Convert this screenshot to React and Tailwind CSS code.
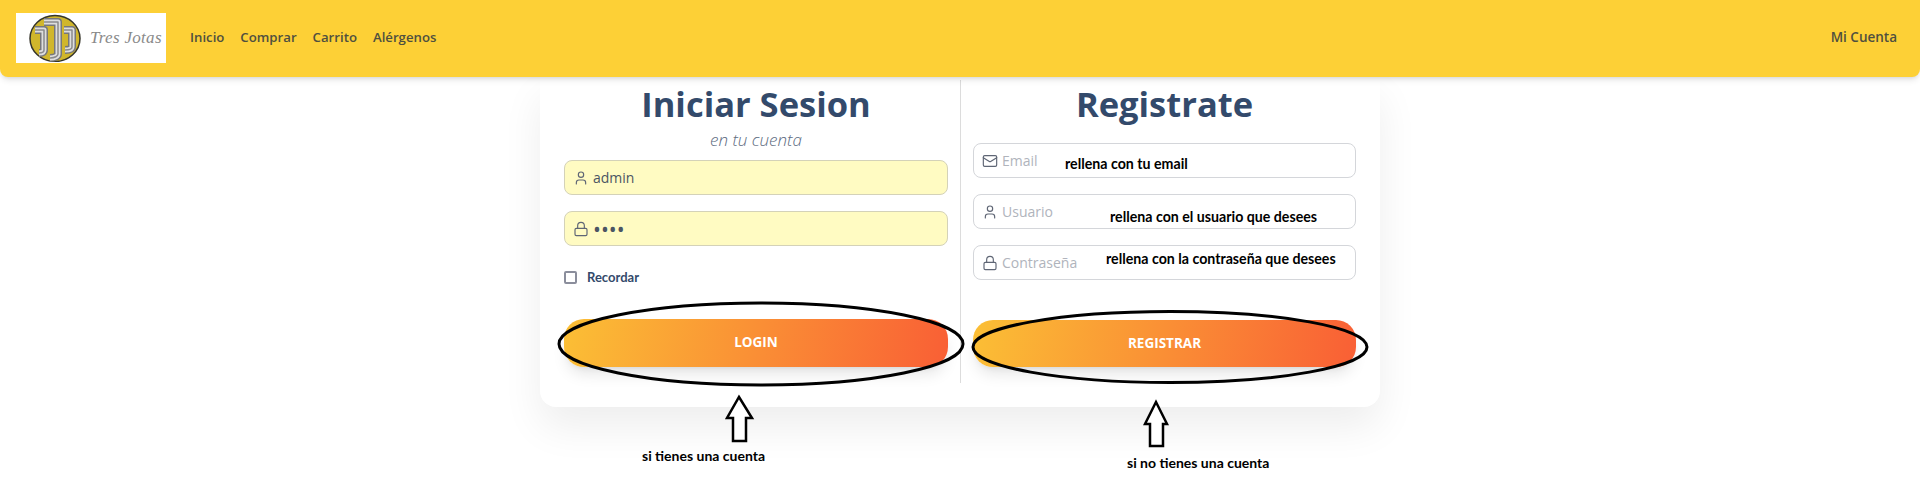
import { User, Lock, Mail } from "lucide-react";

const NAV = ["Inicio", "Comprar", "Carrito", "Alérgenos"];

const JOTAS = [
  "M7 16h9v20c0 2-2 3-5 3",
  "M16 8h14v32c0 2-3 4-8 4",
  "M36 16h8v17c0 2-3 3-7 3",
];

function Logo() {
  return (
    <div className="flex h-[50px] w-[150px] items-center bg-white pl-[12px]">
      <svg width="54" height="48" viewBox="0 0 54 48" className="shrink-0">
        <ellipse cx="27" cy="24.5" rx="25" ry="23" fill="#d0b62c" stroke="#35342a" strokeWidth="1.5" />
        <g fill="none" strokeLinejoin="round">
          {JOTAS.map((d) => (
            <g key={d}>
              <path d={d} stroke="#77777a" strokeWidth="8" />
              <path d={d} stroke="#dedede" strokeWidth="5" />
              <path d={d} stroke="#8a8a8c" strokeWidth="1.5" />
            </g>
          ))}
        </g>
      </svg>
      <span className="ml-[8px] whitespace-nowrap font-['Liberation_Serif',serif] text-[17px] italic leading-none tracking-[0.3px] text-[#8a8a8a]">
        Tres Jotas
      </span>
    </div>
  );
}

function Navbar() {
  return (
    <nav className="relative z-10 flex h-[77px] items-center justify-between rounded-b-lg bg-[#fdd036] pb-[2px] pl-4 pr-[23px] shadow-md">
      <div className="flex items-center">
        <Logo />
        <ul className="ml-6 flex gap-4 text-[13.2px] font-semibold text-[#4f4f3f]">
          {NAV.map((n) => (
            <li key={n}>{n}</li>
          ))}
        </ul>
      </div>
      <span className="text-[13.5px] font-semibold text-[#4f4f3f]">Mi Cuenta</span>
    </nav>
  );
}

function Field({ icon: Icon, placeholder, value, type = "text", filled }) {
  return (
    <label
      className={
        filled
          ? "flex h-[35px] items-center gap-[4px] rounded-lg border border-[#d4d2b8] bg-[#fffbc2] px-[8px]"
          : "flex h-[35px] items-center gap-[4px] rounded-lg border border-[#d4d6da] bg-white px-[8px]"
      }
    >
      <Icon size={16} strokeWidth={1.75} className="shrink-0 text-[#5f6675]" />
      <input
        type={type}
        readOnly
        value={value}
        placeholder={placeholder}
        className={
          type === "password"
            ? "w-full bg-transparent text-[21px] leading-none text-[#4b5563] outline-none"
            : "w-full bg-transparent text-sm text-[#4b5563] outline-none placeholder:text-[#b0b4bc]"
        }
      />
    </label>
  );
}

function SubmitButton({ children }) {
  return (
    <button className="h-full w-full rounded-[20px] bg-[linear-gradient(100deg,#fbbf35,#f95f35)] text-[13.5px] font-bold text-white shadow-lg">
      {children}
    </button>
  );
}

function Annotation({ className, children }) {
  return (
    <span
      className={`absolute whitespace-nowrap font-['Lato',sans-serif] font-bold leading-[18px] text-black ${className}`}
    >
      {children}
    </span>
  );
}

function Arrow({ className, width, height, d }) {
  return (
    <svg width={width} height={height} className={`absolute ${className}`}>
      <path d={d} fill="white" stroke="black" strokeWidth="2.5" />
    </svg>
  );
}

export default function App() {
  return (
    <div className="relative h-[503px] overflow-hidden bg-white font-['Open_Sans',sans-serif]">
      <Navbar />

      <main className="mx-auto grid w-[840px] grid-cols-2 rounded-b-2xl bg-white pb-6 pt-[3px] shadow-[0_20px_40px_rgba(0,0,0,0.07)]">
        {/* Login */}
        <section className="pb-[16px] pl-6 pr-3">
          <h1 className="mt-[4px] text-center text-[34.5px] font-bold leading-10 text-[#334a6b]">Iniciar Sesion</h1>
          <p className="mt-[4px] text-center text-[17px] font-light italic leading-6 text-[#5d6b80]">en tu cuenta</p>
          <div className="mt-2 flex flex-col gap-4">
            <Field icon={User} value="admin" filled />
            <Field icon={Lock} value="1234" type="password" filled />
          </div>
          <label className="mt-[22px] flex items-center gap-[10px]">
            <input type="checkbox" className="h-[13px] w-[13px] appearance-none rounded-[2px] border-2 border-[#8b8e9c]" />
            <span className="font-['Lato',sans-serif] text-[13px] font-bold text-[#334a6b]">Recordar</span>
          </label>
          <div className="mt-[31px] h-[48px]">
            <SubmitButton>LOGIN</SubmitButton>
          </div>
        </section>

        {/* Registro */}
        <section className="border-l border-[#dcdcdc] pb-[15px] pl-3 pr-6">
          <h1 className="mt-[4px] text-center text-[34.5px] font-bold leading-10 text-[#334a6b]">Registrate</h1>
          <div className="mt-[19px] flex flex-col gap-4">
            <Field icon={Mail} placeholder="Email" value="" />
            <Field icon={User} placeholder="Usuario" value="" />
            <Field icon={Lock} placeholder="Contraseña" value="" />
          </div>
          <div className="mt-[40px] h-[47px]">
            <SubmitButton>REGISTRAR</SubmitButton>
          </div>
        </section>
      </main>

      {/* hand-drawn notes on top of the screenshot */}
      <Annotation className="left-[1065px] top-[155px] text-[14.2px]">rellena con tu email</Annotation>
      <Annotation className="left-[1110px] top-[208px] text-[14.2px]">rellena con el usuario que desees</Annotation>
      <Annotation className="left-[1106px] top-[250px] text-[14.2px]">rellena con la contraseña que desees</Annotation>
      <Annotation className="left-[642px] top-[447px] text-[14px]">si tienes una cuenta</Annotation>
      <Annotation className="left-[1127px] top-[454px] text-[14px]">si no tienes una cuenta</Annotation>

      <svg width="408" height="88" className="absolute left-[557px] top-[300px]">
        <ellipse cx="204" cy="44" rx="202" ry="41" fill="none" stroke="black" strokeWidth="3" />
      </svg>
      <svg width="400" height="76" className="absolute left-[970px] top-[309px]">
        <ellipse cx="200" cy="38" rx="197" ry="35.5" fill="none" stroke="black" strokeWidth="3" />
      </svg>

      <Arrow
        className="left-[725px] top-[394px]"
        width="30"
        height="50"
        d="M14 3 L27 24 L21 24 L21 47 L8 47 L8 24 L2 24 Z"
      />
      <Arrow
        className="left-[1143px] top-[399px]"
        width="27"
        height="50"
        d="M13 3 L24 25 L20 25 L20 47 L7 47 L7 25 L2 25 Z"
      />
    </div>
  );
}
